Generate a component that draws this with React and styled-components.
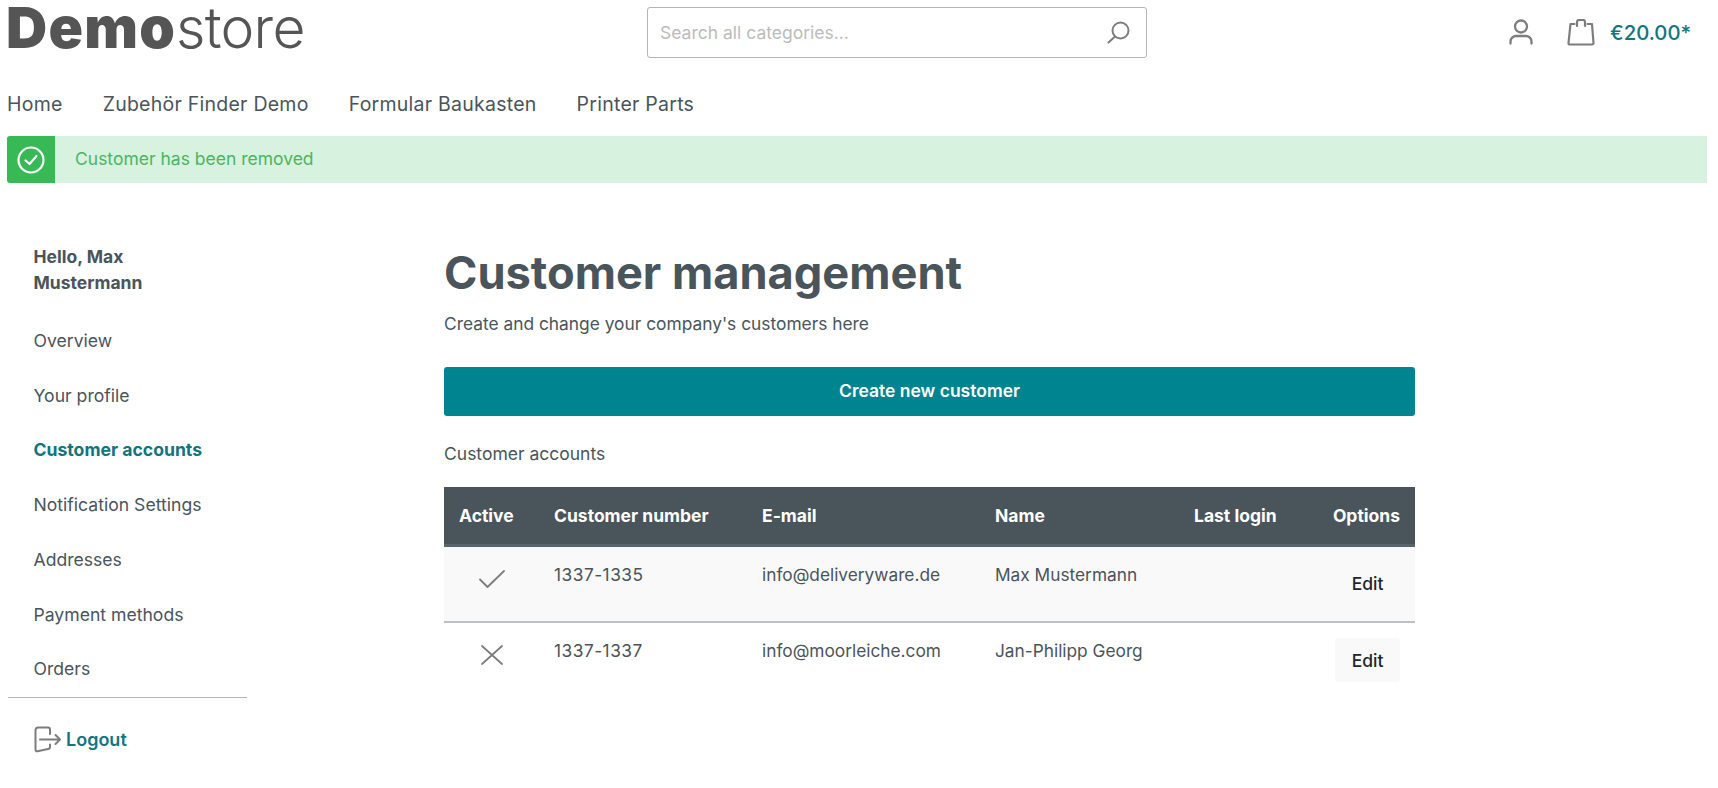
import React from "react";
import styled, { createGlobalStyle } from "styled-components";

const GlobalStyle = createGlobalStyle`
  html, body {
    margin: 0;
    padding: 0;
    background: #fff;
    overflow: hidden;
  }
  body {
    font-family: Inter, "Liberation Sans", sans-serif;
    font-size: 17.5px;
    color: #4a545b;
  }
`;

const Page = styled.div`
  width: 1718px;
  height: 788px;
  overflow: hidden;
`;

const Header = styled.header`
  display: flex;
  align-items: flex-start;
  height: 85px;
  padding: 0 0 0 7px;
`;

const Logo = styled.div`
  width: 640px;
  height: 56px;
  font-size: 57px;
  line-height: 56px;
  letter-spacing: -0.7px;
  color: #555;
  white-space: nowrap;
  font-weight: 300;
  b {
    font-weight: 900;
    letter-spacing: 1.2px;
    margin-left: -1px;
  }
`;

const Search = styled.div`
  width: 500px;
  height: 51px;
  margin-top: 7px;
  box-sizing: border-box;
  display: flex;
  align-items: center;
  justify-content: space-between;
  padding: 0 16px 0 12px;
  border: 1px solid #b5b5b5;
  border-radius: 3px;
  color: #bcbcbc;
`;

const HeaderActions = styled.div`
  display: flex;
  align-items: center;
  gap: 34px;
  height: 50px;
  margin-top: 7px;
  margin-left: 362px;
`;

const Cart = styled.div`
  display: flex;
  align-items: center;
  gap: 15px;
`;

const Price = styled.span`
  color: #10757f;
  font-size: 20.3px;
  font-weight: 500;
`;

const Nav = styled.nav`
  display: flex;
  gap: 40px;
  height: 51px;
  box-sizing: border-box;
  padding: 0 0 13px 7px;
  align-items: center;
  font-size: 19.5px;
  letter-spacing: 0.25px;
`;

const Alert = styled.div`
  display: flex;
  align-items: center;
  height: 47px;
  margin: 0 11px 0 7px;
  background: #d7f2df;
  color: #4ab65f;
  border-radius: 3px 0 0 3px;
  overflow: hidden;
`;

const AlertText = styled.span`
  margin-top: -2px;
`;

const AlertIcon = styled.div`
  width: 48px;
  height: 47px;
  display: flex;
  align-items: center;
  justify-content: center;
  background: #37b956;
  margin-right: 20px;
`;

const Content = styled.div`
  display: flex;
  padding-left: 8px;
  margin-top: 61px;
`;

const Sidebar = styled.aside`
  width: 239px;
  margin-right: 197px;
`;

const Greeting = styled.div`
  padding-left: 25.5px;
  font-weight: 700;
  line-height: 26px;
  margin-bottom: 17px;
`;

const SideItem = styled.div`
  height: 54.75px;
  padding-left: 25.5px;
  display: flex;
  align-items: center;
  font-size: 17.6px;
  font-weight: ${(p) => (p.$active ? 700 : 400)};
  color: ${(p) => (p.$active ? "#10757f" : "#4a545b")};
`;

const SideDivider = styled.div`
  border-top: 1px solid #b5b5b5;
  margin-top: 1px;
`;

const Logout = styled.div`
  display: flex;
  align-items: center;
  padding: 28px 0 0 26px;
  color: #10757f;
  font-size: 18px;
  font-weight: 600;
  gap: 4px;
`;

const Main = styled.main`
  width: 971px;
`;

const Title = styled.h1`
  margin: 1px 0 0;
  font-size: 45.2px;
  line-height: 56px;
  font-weight: 700;
`;

const Sub = styled.p`
  margin: 10px 0 0;
  font-size: 17.35px;
  line-height: 26px;
`;

const CreateButton = styled.button`
  display: block;
  width: 100%;
  height: 49px;
  margin-top: 30px;
  padding: 0 0 2px;
  border: 0;
  border-radius: 3px;
  background: #008490;
  color: #fff;
  font: 600 17.5px Inter, sans-serif;
`;

const SectionLabel = styled.div`
  margin-top: 25px;
  line-height: 26px;
`;

const Table = styled.table`
  width: 971px;
  margin-top: 20px;
  table-layout: fixed;
  border-collapse: collapse;
`;

const Th = styled.th`
  height: 57px;
  padding: 0 ${(p) => (p.$end ? "15px" : "0")} 0 ${(p) => (p.$end ? "0" : "15px")};
  background: #4a545b;
  border-bottom: 3px solid #5a646b;
  color: #fff;
  font-weight: 700;
  text-align: ${(p) => (p.$end ? "right" : "left")};
`;

const Row = styled.tr`
  background: ${(p) => (p.$striped ? "#f9f9f9" : "#fff")};
  border-bottom: ${(p) => (p.$striped ? "2px solid #bcc1c7" : "none")};
`;

const Td = styled.td`
  height: 76px;
  padding: 17px 0 0 15px;
  box-sizing: border-box;
  font-size: 17.3px;
  letter-spacing: ${(p) => (p.$number ? "0.5px" : "normal")};
  vertical-align: top;
`;

const StatusCell = styled.td`
  padding: 22.5px 0 0 ${(p) => p.$inset}px;
  vertical-align: top;
  svg {
    display: block;
  }
`;

const OptionCell = styled.td`
  padding-right: 15px;
  vertical-align: middle;
`;

const EditButton = styled.button`
  display: block;
  width: 65px;
  height: 44px;
  margin-left: auto;
  border: 0;
  border-radius: 3px;
  background: #f9f9f9;
  color: #1f262b;
  font: 500 17.5px Inter, sans-serif;
`;

const stroke = { fill: "none", stroke: "#7d7d7d", strokeLinecap: "round", strokeLinejoin: "round" };

const SearchIcon = () => (
  <svg width="24" height="23" viewBox="0 0 24 23" {...stroke} strokeWidth="2">
    <circle cx="14.5" cy="9.5" r="8" />
    <path d="M9 15.500l-6.500 6" />
  </svg>
);

const UserIcon = () => (
  <svg width="24" height="26" viewBox="0 0 24 26" {...stroke} strokeWidth="2.3">
    <circle cx="12" cy="7.500" r="6" />
    <path d="M1.500 24.500v-2a5.500 5.500 0 0 1 5.500-5.500h10a5.500 5.500 0 0 1 5.500 5.500v2" />
  </svg>
);

const BagIcon = () => (
  <svg width="28" height="27" viewBox="0 0 28 27" {...stroke} strokeWidth="2.2">
    <path d="M7.500 5H3.500L1.500 24a1.500 1.500 0 0 0 1.500 1.500h22a1.500 1.500 0 0 0 1.500-1.500L25 5h-4.500" />
    <path d="M10 7V3a2 2 0 0 1 2-2h4a2 2 0 0 1 2 2v4" />
  </svg>
);

const CheckCircle = () => (
  <svg width="28" height="28" viewBox="0 0 28 28" fill="none" stroke="#fff" strokeWidth="2.2" strokeLinecap="round" strokeLinejoin="round">
    <circle cx="14" cy="14" r="12.500" />
    <path d="M8.500 14.500l4 3.500 7-8" />
  </svg>
);

const CheckIcon = () => (
  <svg width="26" height="18" viewBox="0 0 26 18" {...stroke} strokeWidth="1.8">
    <path d="M1 9.500l7.500 7.500L25 1" />
  </svg>
);

const CrossIcon = () => (
  <svg width="26" height="20" viewBox="0 0 26 20" {...stroke} strokeWidth="1.8">
    <path d="M3 1l20 18M23 1L3 19" />
  </svg>
);

const LogoutIcon = () => (
  <svg width="28" height="27" viewBox="0 0 28 27" {...stroke} strokeWidth="2">
    <path d="M16 8V3.500q0-2-2-2H4q-2 0-2.500 2.500V23.500q0 2 2 1.700L14 23q2-.3 2-2V18.500" />
    <path d="M6 13.500h20M21.500 9l4.500 4.500-4.500 4.500" />
  </svg>
);

const sideItems = ["Overview", "Your profile", "Customer accounts", "Notification Settings", "Addresses", "Payment methods", "Orders"];

export default function App() {
  return (
    <Page>
      <GlobalStyle />
      <Header>
        <Logo><b>Demo</b>store</Logo>
        <Search>
          <span>Search all categories...</span>
          <SearchIcon />
        </Search>
        <HeaderActions>
          <UserIcon />
          <Cart>
            <BagIcon />
            <Price>€20.00*</Price>
          </Cart>
        </HeaderActions>
      </Header>
      <Nav>
        <span>Home</span>
        <span>Zubehör Finder Demo</span>
        <span>Formular Baukasten</span>
        <span>Printer Parts</span>
      </Nav>
      <Alert>
        <AlertIcon><CheckCircle /></AlertIcon>
        <AlertText>Customer has been removed</AlertText>
      </Alert>
      <Content>
        <Sidebar>
          <Greeting>Hello, Max<br />Mustermann</Greeting>
          {sideItems.map((item) => (
            <SideItem key={item} $active={item === "Customer accounts"}>{item}</SideItem>
          ))}
          <SideDivider />
          <Logout><LogoutIcon />Logout</Logout>
        </Sidebar>
        <Main>
          <Title>Customer management</Title>
          <Sub>Create and change your company's customers here</Sub>
          <CreateButton>Create new customer</CreateButton>
          <SectionLabel>Customer accounts</SectionLabel>
          <Table>
            <colgroup>
              <col width="95" />
              <col width="208" />
              <col width="233" />
              <col width="199" />
              <col width="139" />
              <col width="97" />
            </colgroup>
            <thead>
              <tr>
                <Th>Active</Th>
                <Th>Customer number</Th>
                <Th>E-mail</Th>
                <Th>Name</Th>
                <Th>Last login</Th>
                <Th $end>Options</Th>
              </tr>
            </thead>
            <tbody>
              <Row $striped>
                <StatusCell $inset={35}><CheckIcon /></StatusCell>
                <Td $number>1337-1335</Td>
                <Td>info@deliveryware.de</Td>
                <Td>Max Mustermann</Td>
                <Td />
                <OptionCell><EditButton>Edit</EditButton></OptionCell>
              </Row>
              <Row>
                <StatusCell $inset={35}><CrossIcon /></StatusCell>
                <Td $number>1337-1337</Td>
                <Td>info@moorleiche.com</Td>
                <Td>Jan-Philipp Georg</Td>
                <Td />
                <OptionCell><EditButton>Edit</EditButton></OptionCell>
              </Row>
            </tbody>
          </Table>
        </Main>
      </Content>
    </Page>
  );
}
